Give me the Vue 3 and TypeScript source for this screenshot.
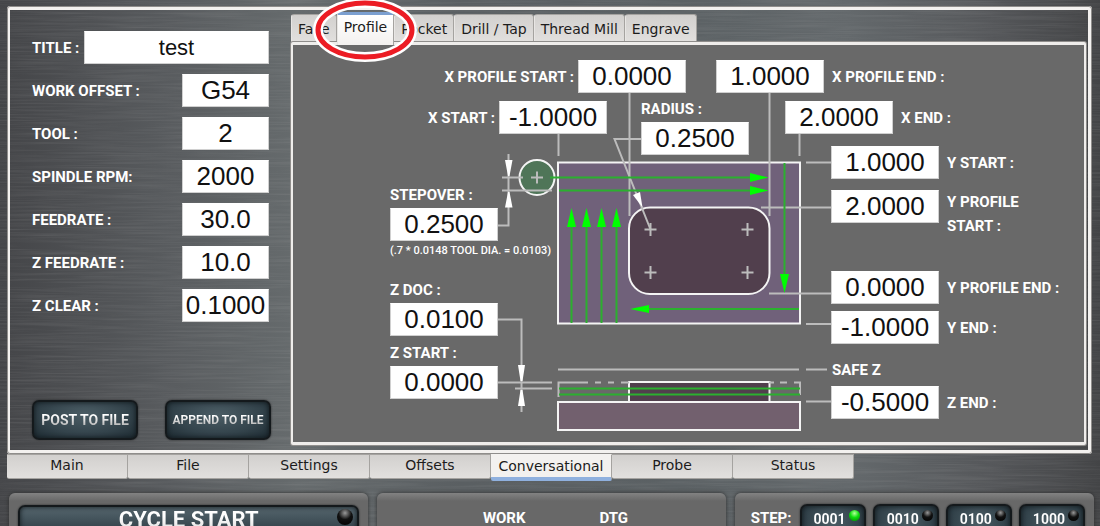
<script setup lang="ts">
import { reactive, ref } from 'vue'

interface Field {
  id: string
  label: string
  value: string
}

const setup = reactive<Field[]>([
  { id: 'title', label: 'TITLE :', value: 'test' },
  { id: 'work-offset', label: 'WORK OFFSET :', value: 'G54' },
  { id: 'tool', label: 'TOOL :', value: '2' },
  { id: 'spindle', label: 'SPINDLE RPM:', value: '2000' },
  { id: 'feedrate', label: 'FEEDRATE :', value: '30.0' },
  { id: 'z-feedrate', label: 'Z FEEDRATE :', value: '10.0' },
  { id: 'z-clear', label: 'Z CLEAR :', value: '0.1000' },
])

interface Dimension extends Field {
  side: 'before' | 'after' | 'above'
  note?: string
}

const dimensions = reactive<Dimension[]>([
  { id: 'x-profile-start', label: 'X PROFILE START :', value: '0.0000', side: 'before' },
  { id: 'x-profile-end', label: 'X PROFILE END :', value: '1.0000', side: 'after' },
  { id: 'x-start', label: 'X START :', value: '-1.0000', side: 'before' },
  { id: 'x-end', label: 'X END :', value: '2.0000', side: 'after' },
  { id: 'radius', label: 'RADIUS :', value: '0.2500', side: 'above' },
  { id: 'y-start', label: 'Y START :', value: '1.0000', side: 'after' },
  { id: 'y-profile-start', label: 'Y PROFILE START :', value: '2.0000', side: 'after' },
  { id: 'stepover', label: 'STEPOVER :', value: '0.2500', side: 'above', note: '(.7 * 0.0148 TOOL DIA. = 0.0103)' },
  { id: 'y-profile-end', label: 'Y PROFILE END :', value: '0.0000', side: 'after' },
  { id: 'y-end', label: 'Y END :', value: '-1.0000', side: 'after' },
  { id: 'z-doc', label: 'Z DOC :', value: '0.0100', side: 'above' },
  { id: 'z-start', label: 'Z START :', value: '0.0000', side: 'above' },
  { id: 'z-end', label: 'Z END :', value: '-0.5000', side: 'after' },
])

const operations = ['Face', 'Profile', 'Pocket', 'Drill / Tap', 'Thread Mill', 'Engrave']
const operation = ref('Profile')
const pages = ['Main', 'File', 'Settings', 'Offsets', 'Conversational', 'Probe', 'Status']
const page = ref('Conversational')
const steps = ['0001', '0010', '0100', '1000']
const step = ref('0001')
</script>

<template>
  <div class="app">
    <svg class="metal" aria-hidden="true">
      <filter id="brushed" x="0" y="0" width="100%" height="100%">
        <feTurbulence type="fractalNoise" baseFrequency="0.012 0.55" numOctaves="3" seed="4" />
        <feColorMatrix type="matrix" values="0 0 0 0 0.5  0 0 0 0 0.5  0 0 0 0 0.5  1.6 0 0 0 -0.6" />
      </filter>
      <rect width="100%" height="100%" filter="url(#brushed)" />
    </svg>

    <main class="frame">
      <form class="setup" @submit.prevent>
        <div v-for="f in setup" :key="f.id" class="row">
          <label class="caption" :for="f.id">{{ f.label }}</label>
          <input :id="f.id" v-model="f.value" class="value" :class="{ wide: f.id === 'title' }" type="text" />
        </div>
        <div class="actions">
          <button type="button" class="dark action"><span class="shine">POST TO FILE</span></button>
          <button type="button" class="dark action tight"><span class="shine">APPEND TO FILE</span></button>
        </div>
      </form>

      <section class="notebook">
        <nav class="ops">
          <button
            v-for="o in operations"
            :key="o"
            type="button"
            class="op"
            :class="{ active: o === operation }"
            @click="operation = o"
          >
            {{ o }}
            <svg v-if="o === 'Profile'" class="ring" viewBox="0 0 106 66" aria-hidden="true">
              <ellipse cx="53" cy="33" rx="47" ry="27" fill="none" stroke="#fff" stroke-width="10" />
              <ellipse cx="53" cy="33" rx="47" ry="27" fill="none" stroke="#ec1c24" stroke-width="5" />
            </svg>
          </button>
        </nav>

        <div class="sheet">
          <div class="canvas">
            <svg class="drawing" viewBox="293 45 789 397" aria-hidden="true">
              <g stroke="#f4f4f4" stroke-width="2">
                <rect x="558" y="162.500" width="242" height="161" fill="#70617a" />
                <rect x="629" y="207.500" width="140.500" height="86.500" rx="21" fill="#513f4d" />
                <rect x="558" y="402" width="242" height="28" fill="#72606e" />
                <rect x="629" y="382" width="140.500" height="20" fill="#513f4d" />
                <circle cx="537" cy="177.500" r="17.500" fill="#4f7558" />
              </g>
              <g class="lead">
                <path d="M558.500 133V156M629.500 93V216M769.500 93V216M799.500 133V156" />
                <path d="M806 162.500H832M761 207.500H832M769 293.500H832M806 324H832M806 369.500H827M806 401.500H832M558 369.500H799" />
                <path d="M558.500 397V382.500H588M595 382.500H601M608 382.500H614M621 382.500H629M769 382.500H774M780 382.500H787M794 382.500H800V395" />
                <path d="M508.500 154V225.500H498M502 177.500H523M502 190.500H552" />
                <path d="M498 319.500H521.500V412M498 382.500H552M515 388.500H552" />
                <path d="M641 139H614.500L650.500 229.500" />
                <path d="M531 177.500H543M537 171.500V183.500M644.500 229.500H656.500M650.500 223V236M741.500 229.500H753.500M747.500 223V236M644.500 272.500H656.500M650.500 266V279M741.500 272.500H753.500M747.500 266V279" />
              </g>
              <g fill="#fff">
                <path d="M505 160H512.500L509.500 176H508ZM505 207.500H512.500L509.500 192H508Z" />
                <path d="M518 365H525L522.500 381H520.500ZM518 406H525L522.500 390H520.500Z" />
                <path d="M633 195L640 192L642.500 207.500Z" />
              </g>
              <path
                class="path"
                d="M550 177.500H755M559 190.500H755M571.500 323V225M586.500 323V225M601.500 323V225M616.500 323V225M784.500 163V276M799 309H645M559 388.500H800M559 394.500H800"
              />
              <g fill="#00ff00">
                <path d="M750 173L768.500 177.500L750 182ZM750 186L768.500 190.500L750 195Z" />
                <path d="M567 227L571.500 208L576 227ZM582 227L586.500 208L591 227ZM597 227L601.500 208L606 227ZM612 227L616.500 208L621 227Z" />
                <path d="M780 274L784.500 293L789 274ZM649 305L630 309L649 313Z" />
              </g>
            </svg>

            <div v-for="d in dimensions" :key="d.id" class="dim" :class="[d.side, d.id]">
              <label class="caption" :for="d.id">{{ d.label }}</label>
              <input :id="d.id" v-model="d.value" class="value" type="text" />
              <small v-if="d.note" class="note">{{ d.note }}</small>
            </div>
            <span class="caption dim safe-z">SAFE Z</span>
          </div>
        </div>
      </section>
    </main>

    <nav class="pages">
      <button
        v-for="p in pages"
        :key="p"
        type="button"
        class="page"
        :class="{ active: p === page }"
        @click="page = p"
      >
        {{ p }}
      </button>
    </nav>

    <footer class="deck">
      <section class="panel cycle">
        <button type="button" class="dark start"><span class="shine">CYCLE START</span><i class="led big"></i></button>
      </section>
      <section class="panel readout">
        <span class="caption">WORK</span>
        <span class="caption">DTG</span>
      </section>
      <section class="panel jog">
        <span class="caption">STEP:</span>
        <div class="steps">
          <button v-for="s in steps" :key="s" type="button" class="dark step" @click="step = s">
            <span class="shine">{{ s }}</span><i class="led" :class="{ on: s === step }"></i>
          </button>
        </div>
      </section>
    </footer>
  </div>
</template>

<style>
body {
  margin: 0;
  background: #505255;
}
</style>

<style scoped>
.app {
  position: relative;
  isolation: isolate;
  display: flex;
  flex-direction: column;
  height: 100vh;
  overflow: hidden;
  box-sizing: border-box;
  background: linear-gradient(90deg, #444548 0%, #585b5e 15%, #666b6d 27%, #5a5f62 42%, #5b6164 62%, #64696c 77%, #55575a 90%, #434446 100%);
  font-family: "DejaVu Sans", sans-serif;
}

.metal {
  position: absolute;
  inset: 0;
  z-index: -1;
  width: 100%;
  height: 100%;
  opacity: 0.15;
}

button,
input {
  box-sizing: border-box;
  margin: 0;
  padding: 0;
  font: inherit;
}

.frame {
  display: flex;
  margin: 6px 8px 0 7px;
  padding: 2px 2px 5px 0;
  border: solid #f3f1ef;
  border-width: 4px 4px 4px 3px;
  border-radius: 3px;
  outline: 1px solid #8f8d8b;
  outline-offset: -1px;
}

.setup {
  display: flex;
  flex-direction: column;
  gap: 10px;
  width: 281px;
  flex: none;
  box-sizing: border-box;
  padding: 19px 22px 5px 22px;
}

.row {
  display: flex;
  align-items: center;
  justify-content: space-between;
}

.caption {
  color: #fff;
  font-family: Roboto, "Liberation Sans", sans-serif;
  font-weight: bold;
  font-size: 15px;
  line-height: 24px;
  white-space: nowrap;
}

.value {
  width: 87px;
  height: 33px;
  border: 1px solid #d0d0d0;
  border-top-color: #fff;
  background: #fff;
  color: #111;
  font-family: "Liberation Sans", sans-serif;
  font-size: 26px;
  text-align: center;
}

.value.wide {
  width: 185px;
  font-size: 22px;
}

.actions {
  display: flex;
  justify-content: space-between;
  margin: auto -2px 0 0;
}

.dark {
  position: relative;
  border: 2px solid #14191c;
  border-radius: 7px;
  background: radial-gradient(ellipse at 50% 35%, #4b5d65, #33434b 60%, #1e2b32);
  box-shadow: inset 0 0 5px #10181c, 0 0 2px #222;
  font-family: Roboto, "Liberation Sans", sans-serif;
  font-weight: bold;
}

.shine {
  background: linear-gradient(#fff 20%, #b8b8b8 85%);
  background-clip: text;
  color: transparent;
  white-space: nowrap;
}

.action {
  width: 106px;
  height: 40px;
  font-size: 14px;
}

.action.tight {
  font-size: 12px;
}

.notebook {
  display: flex;
  flex: 1;
  flex-direction: column;
}

.ops {
  display: flex;
  align-items: flex-end;
  height: 30px;
}

.op,
.page {
  border: 1px solid #a5a3a0;
  background: linear-gradient(#d2d0ce, #e2e0de);
  color: #1c1c1c;
  font-size: 14px;
}

.op {
  height: 28px;
  padding: 0 6px;
  border-width: 1px 1px 0 1px;
  border-left-color: #e8e6e4;
  border-radius: 3px 3px 0 0;
}

.op.active {
  position: relative;
  z-index: 2;
  height: 33px;
  margin-bottom: -3px;
  padding-bottom: 6px;
  border-top: 3px solid #7b9fd0;
  background: linear-gradient(#fff, #f3f1ef);
}

.ring {
  position: absolute;
  top: 50%;
  left: 50%;
  width: 106px;
  height: 66px;
  margin: -33px 0 0 -53px;
}

.sheet {
  border: solid #efedeb;
  border-width: 3px 2px;
  border-radius: 2px;
  background: #696969;
  box-shadow: 0 0 0 1px #8f8d8b;
}

.canvas {
  position: relative;
  width: 789px;
  height: 397px;
}

.drawing {
  display: block;
  width: 100%;
  height: 100%;
}

.lead {
  fill: none;
  stroke: #bcbcbc;
  stroke-width: 2;
}

.path {
  fill: none;
  stroke: #2bb02f;
  stroke-width: 2;
}

.dim {
  position: absolute;
  display: flex;
  align-items: center;
  gap: 8px;
}

.dim .value {
  width: 108px;
}

.before {
  gap: 4px;
}

.after {
  flex-direction: row-reverse;
}

.above {
  flex-direction: column;
  align-items: flex-start;
  gap: 1px;
}

.note {
  color: #fff;
  font-family: Roboto, "Liberation Sans", sans-serif;
  font-weight: 500;
  font-size: 11px;
  line-height: 18px;
  white-space: nowrap;
}

.x-profile-start { top: 15px; right: 396px; }
.x-profile-end { top: 15px; left: 423px; }
.x-start { top: 56px; right: 475px; }
.x-end { top: 56px; left: 492px; }
.radius { top: 52px; left: 348px; }
.y-start { top: 101px; left: 538px; }
.y-profile-start { top: 145px; left: 538px; align-items: flex-start; }
.y-profile-start .caption { width: 80px; white-space: normal; }
.y-profile-end { top: 226px; left: 538px; }
.y-end { top: 266px; left: 538px; }
.z-end { top: 341px; left: 538px; }
.stepover { top: 138px; left: 97px; }
.z-doc { top: 233px; left: 97px; }
.z-start { top: 296px; left: 97px; }
.safe-z { top: 313px; left: 539px; }

.pages {
  display: flex;
  margin-left: 7px;
  height: 27px;
  flex: none;
}

.page {
  width: 121px;
  height: 25px;
  padding-bottom: 3px;
  border-width: 1px 1px 1px 0;
  border-radius: 0 0 2px 2px;
}

.page.active {
  height: 27px;
  border-top-color: #f3f1ef;
  border-bottom: 4px solid #8fb0de;
  background: #f3f1ef;
  padding-bottom: 0;
}

.deck {
  display: grid;
  grid-template-columns: 359fr 348fr 359fr;
  gap: 9px;
  flex: none;
  margin: 12px 6px 0 9px;
}

.panel {
  height: 90px;
  box-sizing: border-box;
  border-radius: 6px;
  background: linear-gradient(#828282, #686868 8px);
  box-shadow: 0 0 4px #2c2c2c;
}

.cycle {
  padding: 12px 9px;
}

.start {
  display: flex;
  justify-content: center;
  width: 100%;
  height: 50px;
  font-size: 22px;
  line-height: 26px;
  background: linear-gradient(#56666e, #2b3a42 60%);
}

.led {
  position: absolute;
  top: 4px;
  right: 4px;
  width: 11px;
  height: 11px;
  border-radius: 50%;
  background: radial-gradient(circle at 50% 25%, #999, #111 45%, #000);
}

.led.big {
  top: 2px;
  width: 16px;
  height: 16px;
}

.led.on {
  background: radial-gradient(circle at 50% 30%, #b6ff9c, #0ddf0d 45%, #067a06);
}

.readout {
  display: flex;
  justify-content: center;
  gap: 74px;
  padding: 17px 0 0 8px;
}

.readout .caption,
.jog .caption {
  line-height: 16px;
}

.jog {
  display: flex;
  gap: 8px;
  padding: 11px 9px 0 16px;
}

.jog .caption {
  padding-top: 6px;
}

.steps {
  display: flex;
  flex: 1;
  gap: 7px;
}

.step {
  display: flex;
  flex: 1;
  justify-content: center;
  height: 50px;
  padding: 6px 6px 0 0;
  font-size: 14px;
  line-height: 14px;
}
</style>
